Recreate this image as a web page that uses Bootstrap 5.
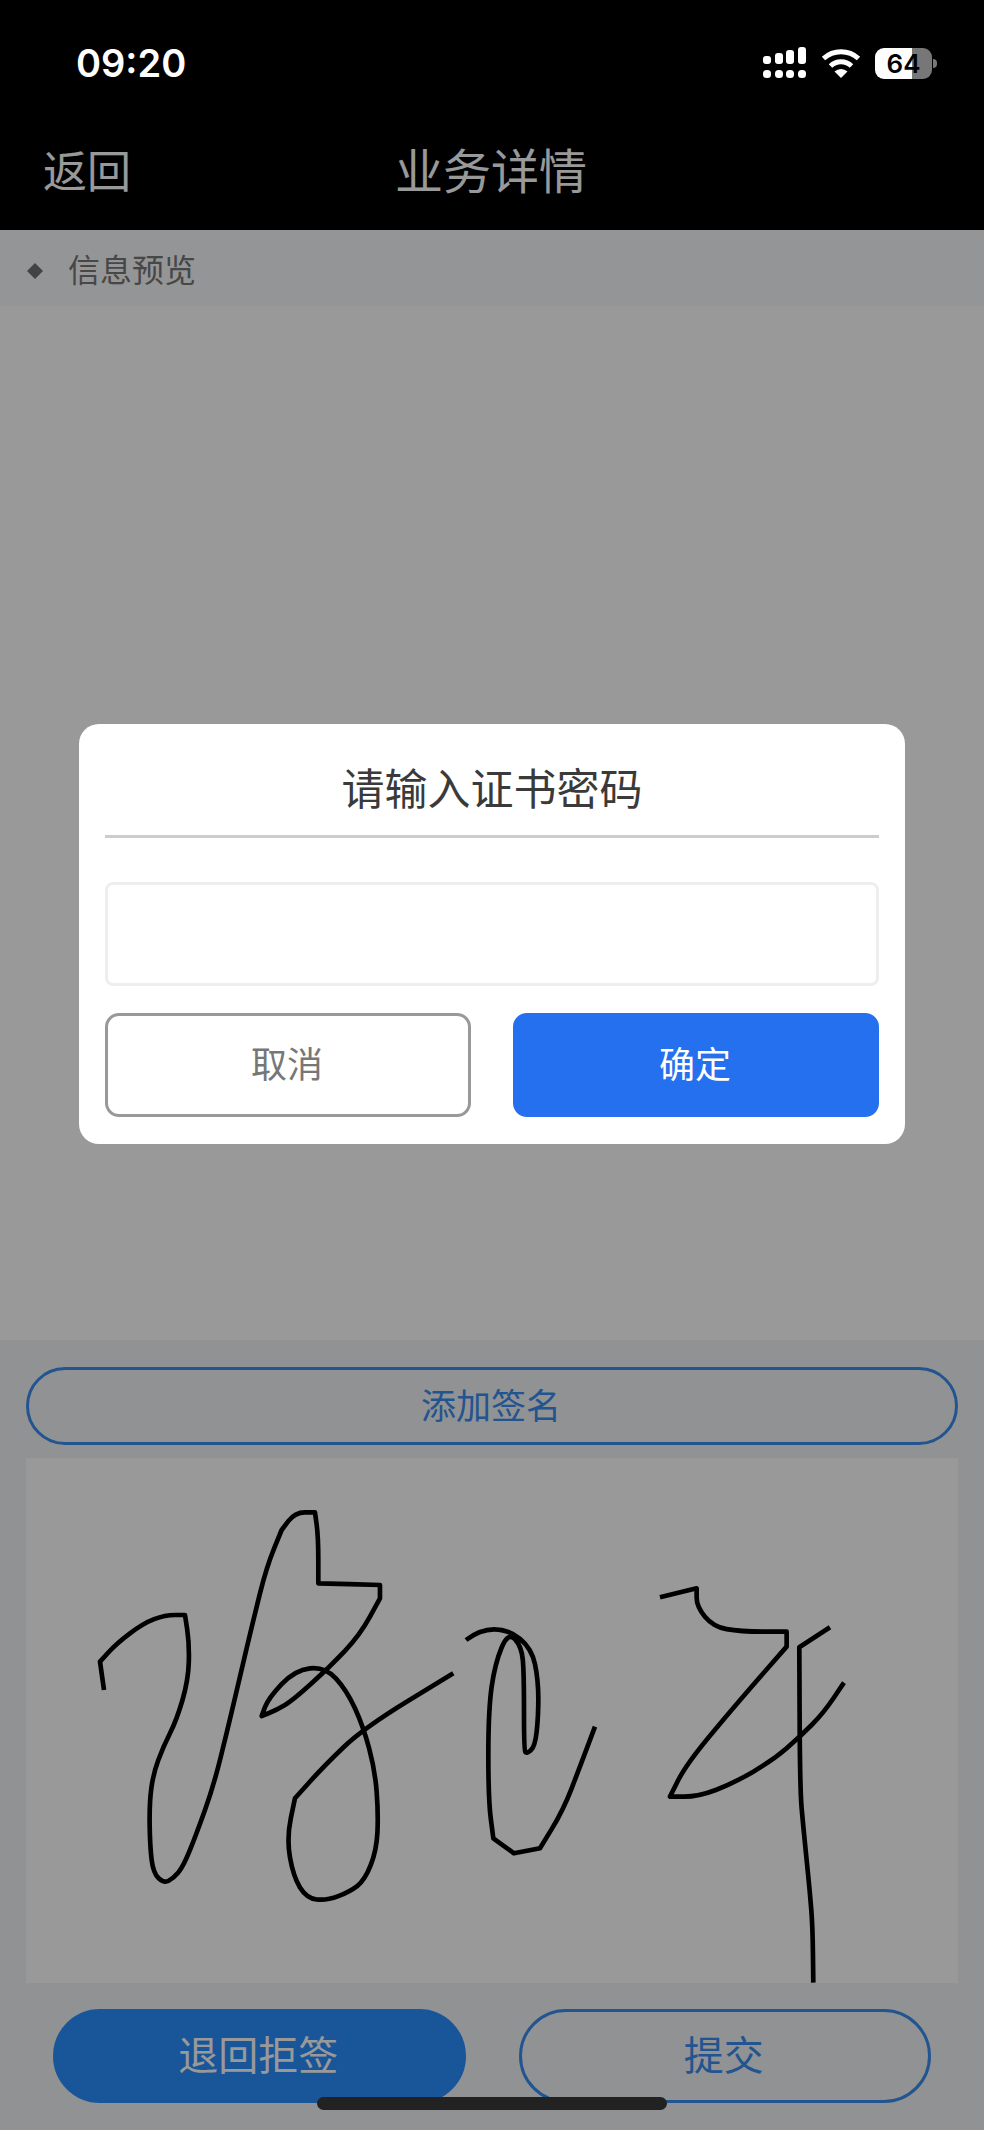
<!DOCTYPE html>
<html lang="zh-CN">
<head>
  <meta charset="UTF-8">
  <title>业务详情</title>
  <link href="https://cdn.jsdelivr.net/npm/bootstrap@5.3.0/dist/css/bootstrap.min.css" rel="stylesheet">
  <style>
    body { font-family: "Liberation Sans", "Noto Sans CJK SC", sans-serif; background: #fff; }
    .screen { width: 984px; height: 2130px; overflow: hidden; }
    .top-area { background: #000; color: #fff; }
    .status-row { height: 126px; padding: 0 47px 0 76px; z-index: 20; }
    .clock { font-family: Inter, "Liberation Sans", sans-serif; font-weight: 600; font-size: 38px; }
    .signal-icon { margin-right: 15px; }
    .wifi-icon { margin-right: 14px; }
    .battery-box { width: 57px; height: 31px; border-radius: 9px; background: linear-gradient(90deg, #fff 65%, #777 65%); color: #000; font-family: Inter, sans-serif; font-weight: 600; font-size: 26px; line-height: 31px; text-align: center; }
    .battery-nub { width: 4px; height: 9px; margin-left: 1px; background: #777; border-radius: 0 4px 4px 0; }
    .nav-row { height: 92px; margin-bottom: 12px; padding: 1px 0 0 43px; font-size: 44px; }
    .nav-side { flex: 1 0 0; }
    .nav-name { font-size: 48px; margin-right: 45px; }
    .info-bar { height: 76px; padding: 6px 0 0 27px; background: #f7f9fa; color: #777; font-size: 32px; gap: 25px; }
    .diamond { width: 16px; height: 16px; background: #717171; clip-path: polygon(50% 0, 100% 50%, 50% 100%, 0 50%); }
    .preview-area { flex: 1 0 0; background: #fff; }
    .sign-panel { background: #f2f4f5; padding: 27px 26px; }
    .pill-btn { border: 3px solid #3a8cf0; border-radius: 60px; color: #3a8cf0; background: transparent; font-size: 35px; line-height: 1; padding: 0 2px 0 0; display: flex; align-items: center; justify-content: center; }
    .pill-wide { height: 78px; width: 100%; margin-bottom: 13px; }
    .sign-box { height: 525px; background: #fff; display: block; }
    .pair-row { padding: 26px 27px 0; gap: 53px; }
    .pill-half { height: 94px; flex: 1 0 0; font-size: 40px; }
    .pill-solid { background: #288eff; border-color: #288eff; color: #fff; }
    .dim-layer { background: rgba(0, 0, 0, .4); z-index: 10; padding-top: 724px; }
    .dialog-box { width: 826px; background: #fff; border-radius: 20px; padding: 0 26px 27px; }
    .dialog-name { height: 114px; padding-top: 22px; border-bottom: 3px solid #ccc; color: #3a3a3a; font-size: 43px; }
    .pwd-input { height: 104px; margin: 44px 0 27px; border: 3px solid #eee; border-radius: 8px; }
    .dialog-btns { gap: 42px; }
    .dialog-btn { flex: 1 0 0; height: 104px; border-radius: 14px; font-size: 36px; padding: 2px 2px 0 0; }
    .dialog-cancel { border: 3px solid #999; color: #777; background: #fff; }
    .dialog-ok { border: 3px solid #2470ee; color: #fff; background: #2470ee; }
    .home-bar { left: 317px; bottom: 20px; width: 350px; height: 13px; border-radius: 7px; background: #222; z-index: 20; }
    .ink { fill: none; stroke: #000; stroke-width: 14; stroke-linejoin: round; stroke-linecap: butt; }
  </style>
</head>
<body class="m-0">
  <div class="screen position-relative d-flex flex-column">
    <div class="top-area">
      <div class="status-row position-relative d-flex align-items-center justify-content-between">
        <span class="clock">09:20</span>
        <div class="d-flex align-items-center">
          <svg class="signal-icon" width="43" height="32" viewBox="0 0 43 32" fill="#fff">
            <rect x="0" y="9" width="8" height="8" rx="3"/><rect x="12" y="6" width="8" height="11" rx="3"/><rect x="23" y="3" width="8" height="14" rx="3"/><rect x="35" y="0" width="8" height="17" rx="3"/>
            <rect x="0" y="23" width="8" height="8" rx="3.5"/><rect x="12" y="23" width="8" height="8" rx="3.5"/><rect x="23" y="23" width="8" height="8" rx="3.5"/><rect x="35" y="23" width="8" height="8" rx="3.5"/>
          </svg>
          <svg class="wifi-icon" width="40" height="30" viewBox="0 0 40 30">
            <path d="M2.5 10.5A26 26 0 0 1 37.5 10.5" fill="none" stroke="#fff" stroke-width="5"/>
            <path d="M9.5 18A15 15 0 0 1 30.5 18" fill="none" stroke="#fff" stroke-width="5"/>
            <path d="M20 30L13.5 23.5A9.5 9.5 0 0 1 26.5 23.5Z" fill="#fff"/>
          </svg>
          <div class="battery-box">64</div>
          <div class="battery-nub"></div>
        </div>
      </div>
      <div class="nav-row d-flex align-items-center">
        <div class="nav-side">返回</div>
        <div class="nav-name">业务详情</div>
        <div class="nav-side"></div>
      </div>
    </div>

    <div class="info-bar d-flex align-items-center">
      <span class="diamond"></span>
      <span>信息预览</span>
    </div>
    <div class="preview-area"></div>

    <div class="sign-panel">
      <button class="btn pill-btn pill-wide">添加签名</button>
      <svg class="sign-box w-100" viewBox="26 1458 932 525">
        <g transform="translate(60 1480) scale(.3333)">
          <path class="ink" data-pts="132,630 120,545 120,545 170,490 250,430 315,405 375,405 375,405 388,490 385,600 350,720 310,800 280,880 268,970 270,1100 280,1180 312,1210 340,1195 370,1160 410,1060 460,920 500,760 540,590 580,420 620,260 665,150 665,150 705,97 765,97 765,97 775,170 775,310 775,310 960,315 960,315 960,355 960,355 900,465 810,560 700,660 650,690 605,708 605,708 625,655 705,570 795,560 860,630 910,740 945,870 955,1000 950,1110 915,1200 870,1235 800,1262 740,1255 700,1190 680,1075 705,955 705,955 790,860 910,745 1180,580"/>
        </g>
        <g transform="translate(440 1540) scale(.3333)">
          <path class="ink" data-pts="78,300 120,268 205,268 275,325 295,420 295,530 285,620 260,642 252,630 252,400 245,320 205,275 165,370 145,510 145,780 160,895 160,895 222,940 222,940 300,925 300,925 370,810 420,680 465,560"/>
          <path class="ink" data-pts="660,172 770,145 770,145 770,200 820,260 900,275 1040,275 1040,275 1040,320 1040,320 900,480 740,670 690,770 690,770 775,770 880,730 1000,660 1080,590 1150,520 1212,428"/>
          <path class="ink" data-pts="1170,262 1078,322 1078,322 1080,750 1090,860 1100,960 1110,1060 1118,1160 1120,1328"/>
        </g>
      </svg>
      <div class="pair-row d-flex">
        <button class="btn pill-btn pill-half pill-solid">退回拒签</button>
        <button class="btn pill-btn pill-half">提交</button>
      </div>
    </div>

    <div class="dim-layer position-absolute top-0 start-0 w-100 h-100 d-flex justify-content-center align-items-start">
      <div class="dialog-box">
        <div class="dialog-name d-flex align-items-center justify-content-center">请输入证书密码</div>
        <input type="password" class="form-control pwd-input">
        <div class="dialog-btns d-flex">
          <button class="btn dialog-btn dialog-cancel">取消</button>
          <button class="btn dialog-btn dialog-ok">确定</button>
        </div>
      </div>
    </div>
    <div class="home-bar position-absolute"></div>
  </div>
  <script src="https://cdn.jsdelivr.net/npm/bootstrap@5.3.0/dist/js/bootstrap.bundle.min.js"></script>
  <script>
    // smooth the pen strokes: a repeated point in data-pts keeps a sharp corner
    document.querySelectorAll(".ink").forEach((stroke) => {
      const pts = stroke.dataset.pts.split(" ").map((p) => p.split(",").map(Number));
      let d = `M${pts[0]}`;
      for (let i = 1; i < pts.length - 1; i++) {
        const midX = (pts[i][0] + pts[i + 1][0]) / 2;
        const midY = (pts[i][1] + pts[i + 1][1]) / 2;
        d += `Q${pts[i]} ${midX},${midY}`;
      }
      d += `L${pts[pts.length - 1]}`;
      stroke.setAttribute("d", d);
    });
  </script>
</body>
</html>
